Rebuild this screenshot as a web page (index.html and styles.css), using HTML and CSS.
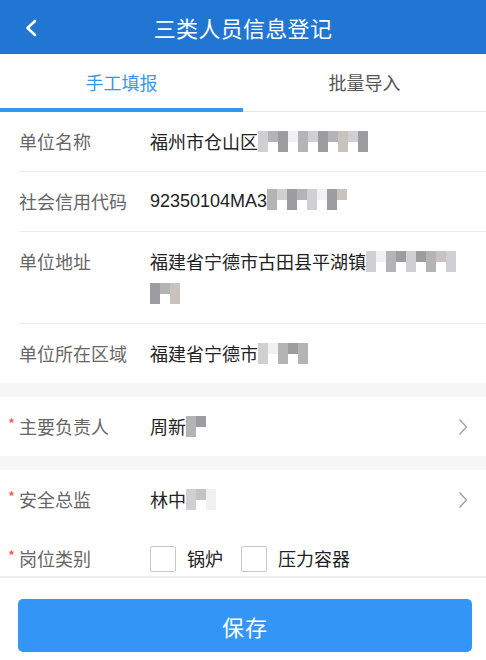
FILE: index.html
```html
<!DOCTYPE html>
<html lang="zh-CN">
<head>
<meta charset="utf-8">
<title>三类人员信息登记</title>
<link rel="stylesheet" href="styles.css">
</head>
<body>
<div class="page">
  <header class="topbar">
    <svg class="back" width="20" height="24" viewBox="0 0 20 24"><path d="M12 5 L4.5 12 L12 19" fill="none" stroke="#fff" stroke-width="2.6" stroke-linecap="round" stroke-linejoin="round"/></svg>
    <h1 class="title">三类人员信息登记</h1>
  </header>
  <nav class="tabs">
    <div class="tab active">手工填报</div>
    <div class="tab">批量导入</div>
  </nav>
  <main class="content">
    <section class="group">
      <div class="row">
        <div class="label">单位名称</div>
        <div class="value">福州市仓山区<span class="mosaic w118"><i class="m1"></i><i class="m2"></i><i class="m3"></i><i class="m0"></i><i class="m2"></i><i class="m1"></i><i class="m3"></i><i class="m2"></i><i class="m4"></i><i class="m1"></i><i class="m3"></i><i class="m2"></i></span></div>
      </div>
      <div class="row">
        <div class="label">社会信用代码</div>
        <div class="value num">92350104MA3<span class="mosaic w86"><i class="m2"></i><i class="m1"></i><i class="m3"></i><i class="m2"></i><i class="m1"></i><i class="m0"></i><i class="m3"></i><i class="m4"></i><i class="m1"></i></span></div>
      </div>
      <div class="row">
        <div class="label">单位地址</div>
        <div class="value">福建省宁德市古田县平湖镇<span class="mosaic w95"><i class="m1"></i><i class="m0"></i><i class="m2"></i><i class="m3"></i><i class="m1"></i><i class="m3"></i><i class="m2"></i><i class="m4"></i><i class="m1"></i><i class="m0"></i></span><br><span class="mosaic w31"><i class="m3"></i><i class="m2"></i><i class="m4"></i></span></div>
      </div>
      <div class="row">
        <div class="label">单位所在区域</div>
        <div class="value">福建省宁德市<span class="mosaic w56"><i class="m1"></i><i class="m0"></i><i class="m2"></i><i class="m3"></i><i class="m2"></i><i class="m1"></i></span></div>
      </div>
    </section>
    <section class="group">
      <div class="row link">
        <div class="label"><span class="req">*</span>主要负责人</div>
        <div class="value">周新<span class="mosaic w25"><i class="m2"></i><i class="m3"></i><i class="m1"></i></span></div>
        <svg class="arrow" width="10" height="18" viewBox="0 0 10 18"><path d="M1.5 1.5 L8.5 9 L1.5 16.5" fill="none" stroke="#a3a3a3" stroke-width="1.4"/></svg>
      </div>
    </section>
    <section class="group">
      <div class="row link plain">
        <div class="label"><span class="req">*</span>安全总监</div>
        <div class="value">林中<span class="mosaic w33"><i class="m1"></i><i class="m4"></i><i class="m0"></i><i class="m2"></i></span></div>
        <svg class="arrow" width="10" height="18" viewBox="0 0 10 18"><path d="M1.5 1.5 L8.5 9 L1.5 16.5" fill="none" stroke="#a3a3a3" stroke-width="1.4"/></svg>
      </div>
      <div class="row">
        <div class="label"><span class="req">*</span>岗位类别</div>
        <div class="value checks">
          <label class="check"><span class="box"></span>锅炉</label>
          <label class="check"><span class="box"></span>压力容器</label>
        </div>
      </div>
    </section>
  </main>
  <footer class="footer">
    <button class="save">保存</button>
  </footer>
</div>
</body>
</html>
```
FILE: styles.css
```css
* { box-sizing: border-box; }
html, body { margin: 0; padding: 0; }
body {
  font-family: "Noto Sans CJK SC", "Noto Sans", "Liberation Sans", sans-serif;
  background: #fff;
  color: #222;
}
.page {
  height: 660px;
  display: flex;
  flex-direction: column;
  overflow: hidden;
}
.topbar {
  height: 54px;
  flex: none;
  background: #2176d3;
  display: flex;
  align-items: center;
  justify-content: center;
  position: relative;
}
.back {
  position: absolute;
  left: 23px;
  top: 16px;
}
.title {
  margin: 0;
  font-size: 22px;
  font-weight: 400;
  color: #fff;
  letter-spacing: 0.3px;
}
.tabs {
  height: 58px;
  flex: none;
  display: flex;
  border-bottom: 1px solid #e6e6e6;
}
.tab {
  flex: 1;
  display: flex;
  align-items: center;
  justify-content: center;
  font-size: 18px;
  color: #555;
  padding-top: 2px;
  padding-bottom: 3px;
}
.tab.active {
  color: #3797f2;
  border-bottom: 4px solid #3396f4;
  margin-bottom: -1px;
  padding-bottom: 0;
}
.content {
  flex: 1;
  overflow: hidden;
  background: #f7f7f7;
}
.group {
  background: #fff;
  margin-bottom: 14px;
}
.group:last-child { margin-bottom: 0; }
.row {
  display: flex;
  align-items: flex-start;
  margin-left: 19px;
  padding: 14px 0;
  border-bottom: 1px solid #ececec;
  line-height: 31px;
  font-size: 18px;
}
.group .row:last-child,
.row.plain { border-bottom: none; }
.label {
  width: 131px;
  flex: none;
  color: #666;
  position: relative;
}
.req {
  position: absolute;
  left: -11px;
  top: -3px;
  color: #f0504a;
  font-size: 15px;
}
.value {
  flex: 1;
  color: #222;
  word-break: break-all;
}
.value.num {
  font-family: "Liberation Sans", "Noto Sans CJK SC", sans-serif;
  font-size: 18px;
}
.row.link { align-items: center; padding-right: 18px; }
.arrow { flex: none; }
.mosaic {
  display: inline-flex;
  vertical-align: -3px;
  height: 21px;
  flex-wrap: wrap;
  overflow: hidden;
}
.mosaic i {
  display: block;
  width: 10px;
  height: 10.5px;
}
.mosaic i:nth-child(odd) { height: 21px; }
.w118 { width: 118px; }
.w86 { width: 86px; border-radius: 0 8px 8px 0; }
.w95 { width: 95px; }
.w31 { width: 31px; margin-top: 6px; }
.w56 { width: 56px; }
.w25 { width: 25px; }
.w33 { width: 33px; }
.m0 { background: #f1f1f3; }
.m1 { background: #d0d0d2; }
.m2 { background: #b4b4b6; }
.m3 { background: #9d9c9e; }
.m4 { background: #c9c3c0; }
.checks {
  display: flex;
  align-items: center;
  gap: 18px;
}
.check {
  display: flex;
  align-items: center;
  gap: 11px;
}
.box {
  width: 26px;
  height: 26px;
  border: 1px solid #c9c9c9;
  border-radius: 2px;
  background: #fff;
}
.footer {
  flex: none;
  height: 84px;
  border-top: 2px solid #eeeeee;
  background: #fff;
  padding: 21px 14px 0 18px;
}
.save {
  display: block;
  width: 100%;
  height: 53px;
  border: none;
  border-radius: 5px;
  background: #3396f7;
  color: #fff;
  font-family: "Noto Sans CJK SC", sans-serif;
  font-size: 22px;
  letter-spacing: 1px;
}
```
